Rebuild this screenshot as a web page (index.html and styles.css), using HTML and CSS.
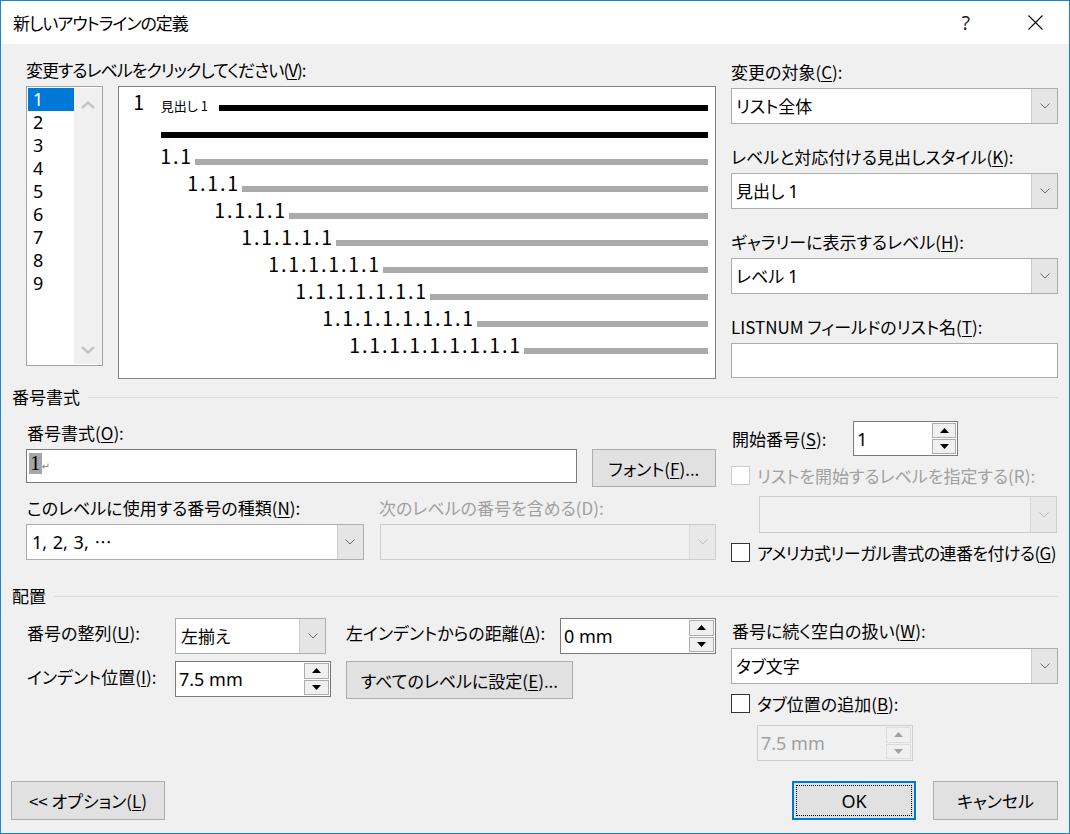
FILE: index.html
```html
<!DOCTYPE html>
<html lang="ja">
<head>
<meta charset="utf-8">
<title>新しいアウトラインの定義</title>
<link rel="stylesheet" href="styles.css">
</head>
<body>
<div class="window">
  <div class="titlebar">
    <span class="title tight">新しいアウトラインの定義</span>
    <span class="help">?</span>
    <svg class="close" width="15" height="15" viewBox="0 0 15 15"><path d="M0.5 0.5L14.5 14.5M14.5 0.5L0.5 14.5" stroke="#000" stroke-width="1.1" fill="none"/></svg>
  </div>

  <div class="content">
    <div class="top">
      <div class="top-left">
        <div class="label tight">変更するレベルをクリックしてください(<u>V</u>):</div>
        <div class="top-row">
          <div class="levels">
            <ul class="level-items">
              <li class="sel">1</li>
              <li>2</li>
              <li>3</li>
              <li>4</li>
              <li>5</li>
              <li>6</li>
              <li>7</li>
              <li>8</li>
              <li>9</li>
            </ul>
            <div class="vscroll">
              <svg width="14" height="8" viewBox="0 0 14 8"><path d="M1 7L7 1.5L13 7" fill="none" stroke="#c4c4c4" stroke-width="2.4"/></svg>
              <svg width="14" height="8" viewBox="0 0 14 8"><path d="M1 1L7 6.5L13 1" fill="none" stroke="#c4c4c4" stroke-width="2.4"/></svg>
            </div>
          </div>
          <div class="preview">
            <div class="prow lv1"><span class="pnum p1">1</span><span class="phead">見出し 1</span><span class="bar black"></span></div>
            <div class="prow lv2"><span class="bar black"></span></div>
            <div class="prow lv2"><span class="pnum">1.1</span><span class="bar"></span></div>
            <div class="prow lv3"><span class="pnum">1.1.1</span><span class="bar"></span></div>
            <div class="prow lv4"><span class="pnum">1.1.1.1</span><span class="bar"></span></div>
            <div class="prow lv5"><span class="pnum">1.1.1.1.1</span><span class="bar"></span></div>
            <div class="prow lv6"><span class="pnum">1.1.1.1.1.1</span><span class="bar"></span></div>
            <div class="prow lv7"><span class="pnum">1.1.1.1.1.1.1</span><span class="bar"></span></div>
            <div class="prow lv8"><span class="pnum">1.1.1.1.1.1.1.1</span><span class="bar"></span></div>
            <div class="prow lv9"><span class="pnum">1.1.1.1.1.1.1.1.1</span><span class="bar"></span></div>
          </div>
        </div>
      </div>

      <div class="top-right">
        <div class="field">
          <div class="label">変更の対象(<u>C</u>):</div>
          <div class="combo"><span class="val">リスト全体</span><span class="dd"><svg width="10" height="6" viewBox="0 0 10 6"><path d="M0.5 0.5L5 5L9.5 0.5" fill="none" stroke="#6a6a6a"/></svg></span></div>
        </div>
        <div class="field">
          <div class="label">レベルと対応付ける見出しスタイル(<u>K</u>):</div>
          <div class="combo"><span class="val">見出し <span class="num">1</span></span><span class="dd"><svg width="10" height="6" viewBox="0 0 10 6"><path d="M0.5 0.5L5 5L9.5 0.5" fill="none" stroke="#6a6a6a"/></svg></span></div>
        </div>
        <div class="field">
          <div class="label">ギャラリーに表示するレベル(<u>H</u>):</div>
          <div class="combo"><span class="val">レベル <span class="num">1</span></span><span class="dd"><svg width="10" height="6" viewBox="0 0 10 6"><path d="M0.5 0.5L5 5L9.5 0.5" fill="none" stroke="#6a6a6a"/></svg></span></div>
        </div>
        <div class="field last">
          <div class="label">LISTNUM フィールドのリスト名(<u>T</u>):</div>
          <div class="textbox listnum"></div>
        </div>
      </div>
    </div>

    <div class="sect sect1"><span>番号書式</span></div>

    <div class="nf">
      <div class="nf-left">
        <div class="label">番号書式(<u>O</u>):</div>
        <div class="nf-row">
          <div class="textbox fmt"><span class="hl">1</span><span class="ret">↵</span></div>
          <div class="button font-btn">フォント(<u>F</u>)...</div>
        </div>
        <div class="nf-labels">
          <div class="label lab-kind">このレベルに使用する番号の種類(<u>N</u>):</div>
          <div class="label disabled">次のレベルの番号を含める(D):</div>
        </div>
        <div class="nf-combos">
          <div class="combo kind"><span class="val"><span class="num">1, 2, 3, </span><span class="ell">…</span></span><span class="dd"><svg width="10" height="6" viewBox="0 0 10 6"><path d="M0.5 0.5L5 5L9.5 0.5" fill="none" stroke="#6a6a6a"/></svg></span></div>
          <div class="combo off next"><span class="val"></span><span class="dd"><svg width="10" height="6" viewBox="0 0 10 6"><path d="M0.5 0.5L5 5L9.5 0.5" fill="none" stroke="#bdbdbd"/></svg></span></div>
        </div>
      </div>

      <div class="nf-right">
        <div class="start-row">
          <div class="label start-lab">開始番号(<u>S</u>):</div>
          <div class="spin start-spin">
            <span class="val num">1</span>
            <span class="arrows">
              <span class="arr"><svg width="9" height="5" viewBox="0 0 9 5"><path d="M0 5L4.5 0L9 5Z"/></svg></span>
              <span class="arr"><svg width="9" height="5" viewBox="0 0 9 5"><path d="M0 0L4.5 5L9 0Z"/></svg></span>
            </span>
          </div>
        </div>
        <div class="cb-row disabled">
          <span class="cb off"></span><span class="cb-text">リストを開始するレベルを指定する(R):</span>
        </div>
        <div class="combo off restart"><span class="val"></span><span class="dd"><svg width="10" height="6" viewBox="0 0 10 6"><path d="M0.5 0.5L5 5L9.5 0.5" fill="none" stroke="#bdbdbd"/></svg></span></div>
        <div class="cb-row legal">
          <span class="cb"></span><span class="cb-text tight-s">アメリカ式リーガル書式の連番を付ける(<u>G</u>)</span>
        </div>
      </div>
    </div>

    <div class="sect sect2"><span>配置</span></div>

    <div class="pl">
      <div class="pl-left">
        <div class="pl-row">
          <div class="label pl-lab">番号の整列(<u>U</u>):</div>
          <div class="combo align"><span class="val">左揃え</span><span class="dd"><svg width="10" height="6" viewBox="0 0 10 6"><path d="M0.5 0.5L5 5L9.5 0.5" fill="none" stroke="#6a6a6a"/></svg></span></div>
          <div class="label pl-lab dist-lab">左インデントからの距離(<u>A</u>):</div>
          <div class="spin dist">
            <span class="val num">0 mm</span>
            <span class="arrows">
              <span class="arr"><svg width="9" height="5" viewBox="0 0 9 5"><path d="M0 5L4.5 0L9 5Z"/></svg></span>
              <span class="arr"><svg width="9" height="5" viewBox="0 0 9 5"><path d="M0 0L4.5 5L9 0Z"/></svg></span>
            </span>
          </div>
        </div>
        <div class="pl-row row2">
          <div class="label pl-lab lab2">インデント位置(<u>I</u>):</div>
          <div class="spin indent">
            <span class="val num">7.5 mm</span>
            <span class="arrows">
              <span class="arr"><svg width="9" height="5" viewBox="0 0 9 5"><path d="M0 5L4.5 0L9 5Z"/></svg></span>
              <span class="arr"><svg width="9" height="5" viewBox="0 0 9 5"><path d="M0 0L4.5 5L9 0Z"/></svg></span>
            </span>
          </div>
          <div class="button all-btn">すべてのレベルに設定(<u>E</u>)...</div>
        </div>
      </div>

      <div class="pl-right">
        <div class="label">番号に続く空白の扱い(<u>W</u>):</div>
        <div class="combo follow"><span class="val">タブ文字</span><span class="dd"><svg width="10" height="6" viewBox="0 0 10 6"><path d="M0.5 0.5L5 5L9.5 0.5" fill="none" stroke="#6a6a6a"/></svg></span></div>
        <div class="cb-row tabadd">
          <span class="cb"></span><span class="cb-text">タブ位置の追加(<u>B</u>):</span>
        </div>
        <div class="spin off tabpos">
          <span class="val num">7.5 mm</span>
          <span class="arrows">
            <span class="arr"><svg width="9" height="5" viewBox="0 0 9 5"><path d="M0 5L4.5 0L9 5Z" fill="#a0a0a0"/></svg></span>
            <span class="arr"><svg width="9" height="5" viewBox="0 0 9 5"><path d="M0 0L4.5 5L9 0Z" fill="#a0a0a0"/></svg></span>
          </span>
        </div>
      </div>
    </div>

    <div class="footer">
      <div class="button opt-btn">&lt;&lt; オプション(<u>L</u>)</div>
      <div class="footer-right">
        <div class="button ok-btn"><span class="focus">OK</span></div>
        <div class="button cancel-btn">キャンセル</div>
      </div>
    </div>
  </div>
</div>
</body>
</html>
```

FILE: styles.css
```css
* { box-sizing: border-box; }
html, body { margin: 0; padding: 0; }
body {
  width: 1070px;
  height: 834px;
  overflow: hidden;
  background: #f0f0f0;
  color: #000;
  font-family: "Noto Sans CJK JP", "Noto Sans", sans-serif;
  font-feature-settings: "palt";
  font-size: 17px;
}
u { text-decoration-thickness: 1px; text-underline-offset: 2px; }
.tight { letter-spacing: -1px; }
.tight-s { letter-spacing: -0.6px; }
.num { font-family: "Noto Sans", sans-serif; font-size: 18px; }
.ell { font-family: "Noto Sans CJK JP", sans-serif; font-feature-settings: normal; font-size: 17px; }

.window {
  width: 1070px;
  height: 834px;
  border: 1px solid #1883d7;
  background: #f0f0f0;
  display: flex;
  flex-direction: column;
}

/* title bar */
.titlebar {
  flex: none;
  height: 43px;
  background: #fff;
  display: flex;
  align-items: center;
}
.title { flex: 1; padding-left: 12px; font-size: 17px; line-height: 20px; }
.help { font-size: 19px; line-height: 20px; margin-right: 58px; font-family: "Noto Sans", sans-serif; color: #222; }
.close { margin-right: 26px; display: block; }

.content {
  flex: 1;
  padding: 0 11px;
  display: flex;
  flex-direction: column;
}
.label { line-height: 20px; height: 20px; white-space: nowrap; }
.disabled, .disabled .cb-text { color: #a0a0a0; }

/* top */
.top { display: flex; gap: 15px; padding-left: 14px; }
.top-left { width: 690px; padding-top: 16px; }
.top-row { display: flex; gap: 15px; margin-top: 6px; align-items: flex-start; }

.levels {
  width: 77px;
  height: 280px;
  border: 1px solid #a3a3a3;
  background: #fff;
  display: flex;
  padding: 1px 0 1px 1px;
}
.level-items { list-style: none; margin: 0; padding: 0; width: 46px; }
.level-items li { height: 23px; line-height: 23px; padding-left: 5px; font-size: 18px; font-family: "Noto Sans", sans-serif; }
.level-items li.sel { background: #0078d7; color: #fff; }
.vscroll {
  flex: 1;
  background: #f0f0f0;
  display: flex;
  flex-direction: column;
  justify-content: space-between;
  align-items: center;
  padding: 13px 0 10px;
}
.vscroll svg { display: block; }

.preview {
  width: 600px;
  height: 293px;
  border: 1px solid #828282;
  background: #fff;
  padding-right: 7px;
}
.prow { display: flex; align-items: flex-end; height: 27px; }
.prow:first-child { height: 26px; }
.pnum {
  font-family: "Noto Sans Mono CJK JP", "Liberation Mono", monospace;
  font-feature-settings: normal;
  font-weight: 300;
  font-size: 20px;
  line-height: 18px;
  margin-bottom: 2px;
  white-space: nowrap;
}
.p1 { width: 27px; }
.phead { width: 58px; font-size: 13px; line-height: 14px; white-space: nowrap; }
.bar { flex: 1; height: 6px; background: #aaaaaa; margin-bottom: 2px; margin-left: 4px; }
.bar.black { background: #000; }
.bar:first-child, .phead + .bar { margin-left: 0; }
.lv1 { padding-left: 15px; }
.lv2 { padding-left: 42px; }
.lv3 { padding-left: 69px; }
.lv4 { padding-left: 96px; }
.lv5 { padding-left: 123px; }
.lv6 { padding-left: 150px; }
.lv7 { padding-left: 177px; }
.lv8 { padding-left: 204px; }
.lv9 { padding-left: 231px; }

.top-right { width: 327px; padding-top: 18px; }
.field { margin-bottom: 23px; }
.field.last { margin-bottom: 0; }
.field .label + * { margin-top: 6px; }

/* controls */
.combo {
  display: flex;
  height: 36px;
  border: 1px solid #adadad;
  background: #fff;
}
.combo .val { flex: 1; padding-left: 4px; line-height: 34px; white-space: nowrap; }
.combo .dd {
  width: 26px;
  background: #e5e5e5;
  border-left: 1px solid #cdcdcd;
  display: flex;
  align-items: center;
  justify-content: center;
}
.combo.off { background: #f0f0f0; border-color: #cccccc; }
.combo.off .dd { background: #e8e8e8; border-left-color: #d9d9d9; }

.textbox { border: 1px solid #adadad; background: #fff; }
.listnum { height: 35px; }

.spin {
  display: flex;
  height: 36px;
  border: 1px solid #7a7a7a;
  background: #fff;
}
.spin .val { flex: 1; padding-left: 3px; line-height: 34px; white-space: nowrap; }
.spin .arrows { width: 26px; display: flex; flex-direction: column; padding: 1px 1px 1px 0; gap: 1px; }
.spin .arr {
  flex: 1;
  background: #f0f0f0;
  border: 1px solid #adadad;
  display: flex;
  align-items: center;
  justify-content: center;
}
.spin .arr svg { display: block; }
.spin.off { border-color: #cccccc; background: #f0f0f0; color: #a0a0a0; }
.spin.off .arr { border-color: #dcdcdc; background: #f0f0f0; }

.button {
  background: #e1e1e1;
  border: 1px solid #adadad;
  display: flex;
  align-items: center;
  justify-content: center;
  white-space: nowrap;
}

.cb-row { display: flex; align-items: center; height: 19px; }
.cb { width: 19px; height: 19px; border: 1px solid #333; background: #fff; flex: none; margin-right: 7px; }
.cb.off { border-color: #cccccc; }
.cb-text { line-height: 20px; white-space: nowrap; }

/* section headers */
.sect { display: flex; align-items: center; height: 20px; }
.sect span { line-height: 20px; }
.sect::after { content: ""; flex: 1; border-top: 1px solid #dcdcdc; margin-left: 8px; }
.sect1 { margin-top: 8px; }
.sect2 { margin-top: 24px; }

/* number format */
.nf { display: flex; gap: 15px; padding-left: 14px; }
.nf-left { width: 690px; padding-top: 16px; }
.nf-left > .label { padding-left: 1px; }
.nf-row { display: flex; align-items: flex-start; margin-top: 6px; }
.fmt { width: 551px; height: 34px; border-color: #7a7a7a; padding: 2px 0 0 2px; display: flex; align-items: flex-start; }
.hl {
  background: #a6a6a6;
  font-family: "Liberation Serif", serif;
  font-size: 21px;
  line-height: 21px;
  height: 21px;
  padding: 0 1px;
  margin-top: 1px;
}
.ret { font-size: 10px; color: #808080; margin-top: 9px; font-family: "DejaVu Sans", sans-serif; }
.font-btn { width: 124px; height: 38px; margin-left: 15px; }
.nf-labels { display: flex; margin-top: 11px; }
.lab-kind { width: 353px; padding-left: 1px; }
.nf-combos { display: flex; gap: 16px; margin-top: 6px; }
.kind { width: 338px; }
.kind .val { padding-left: 5px; word-spacing: 1px; }
.next { width: 337px; }

.nf-right { width: 327px; padding-top: 14px; }
.start-row { display: flex; align-items: center; height: 35px; }
.start-lab { width: 122px; padding-left: 1px; }
.start-spin { width: 105px; height: 35px; }
.start-spin .arrows { width: 25px; }
.nf-right .cb-row.disabled { margin-top: 10px; }
.restart { width: 298px; height: 37px; margin-left: 28px; margin-top: 11px; }
.legal { margin-top: 10px; }

/* placement */
.pl { display: flex; gap: 15px; padding-left: 14px; }
.pl-left { width: 690px; padding-top: 12px; }
.pl-row { display: flex; align-items: flex-start; }
.pl-lab { width: 149px; padding-left: 1px; margin-top: 5px; }
.align { width: 151px; }
.align .val { padding-left: 5px; }
.dist-lab { width: 214px; margin-left: 20px; padding-left: 0; }
.dist { width: 156px; }
.row2 { margin-top: 7px; }
.lab2 { margin-top: 6px; }
.indent { width: 156px; }
.all-btn { width: 227px; height: 38px; margin-left: 15px; }

.pl-right { width: 327px; padding-top: 15px; }
.pl-right > .label { padding-left: 1px; }
.follow { margin-top: 7px; }
.tabadd { margin-top: 10px; }
.tabpos { width: 156px; margin-left: 26px; margin-top: 12px; }

/* footer */
.footer { display: flex; justify-content: space-between; margin-top: 20px; margin-left: -1px; }
.opt-btn { width: 154px; height: 39px; }
.footer-right { display: flex; gap: 17px; }
.ok-btn { width: 124px; height: 39px; border: 2px solid #0078d7; padding: 2px; }
.ok-btn .focus {
  flex: 1;
  align-self: stretch;
  border: 1px dotted #000;
  display: flex;
  align-items: center;
  justify-content: center;
  font-family: "Noto Sans", sans-serif;
  font-size: 18px;
}
.cancel-btn { width: 125px; height: 39px; }
```
